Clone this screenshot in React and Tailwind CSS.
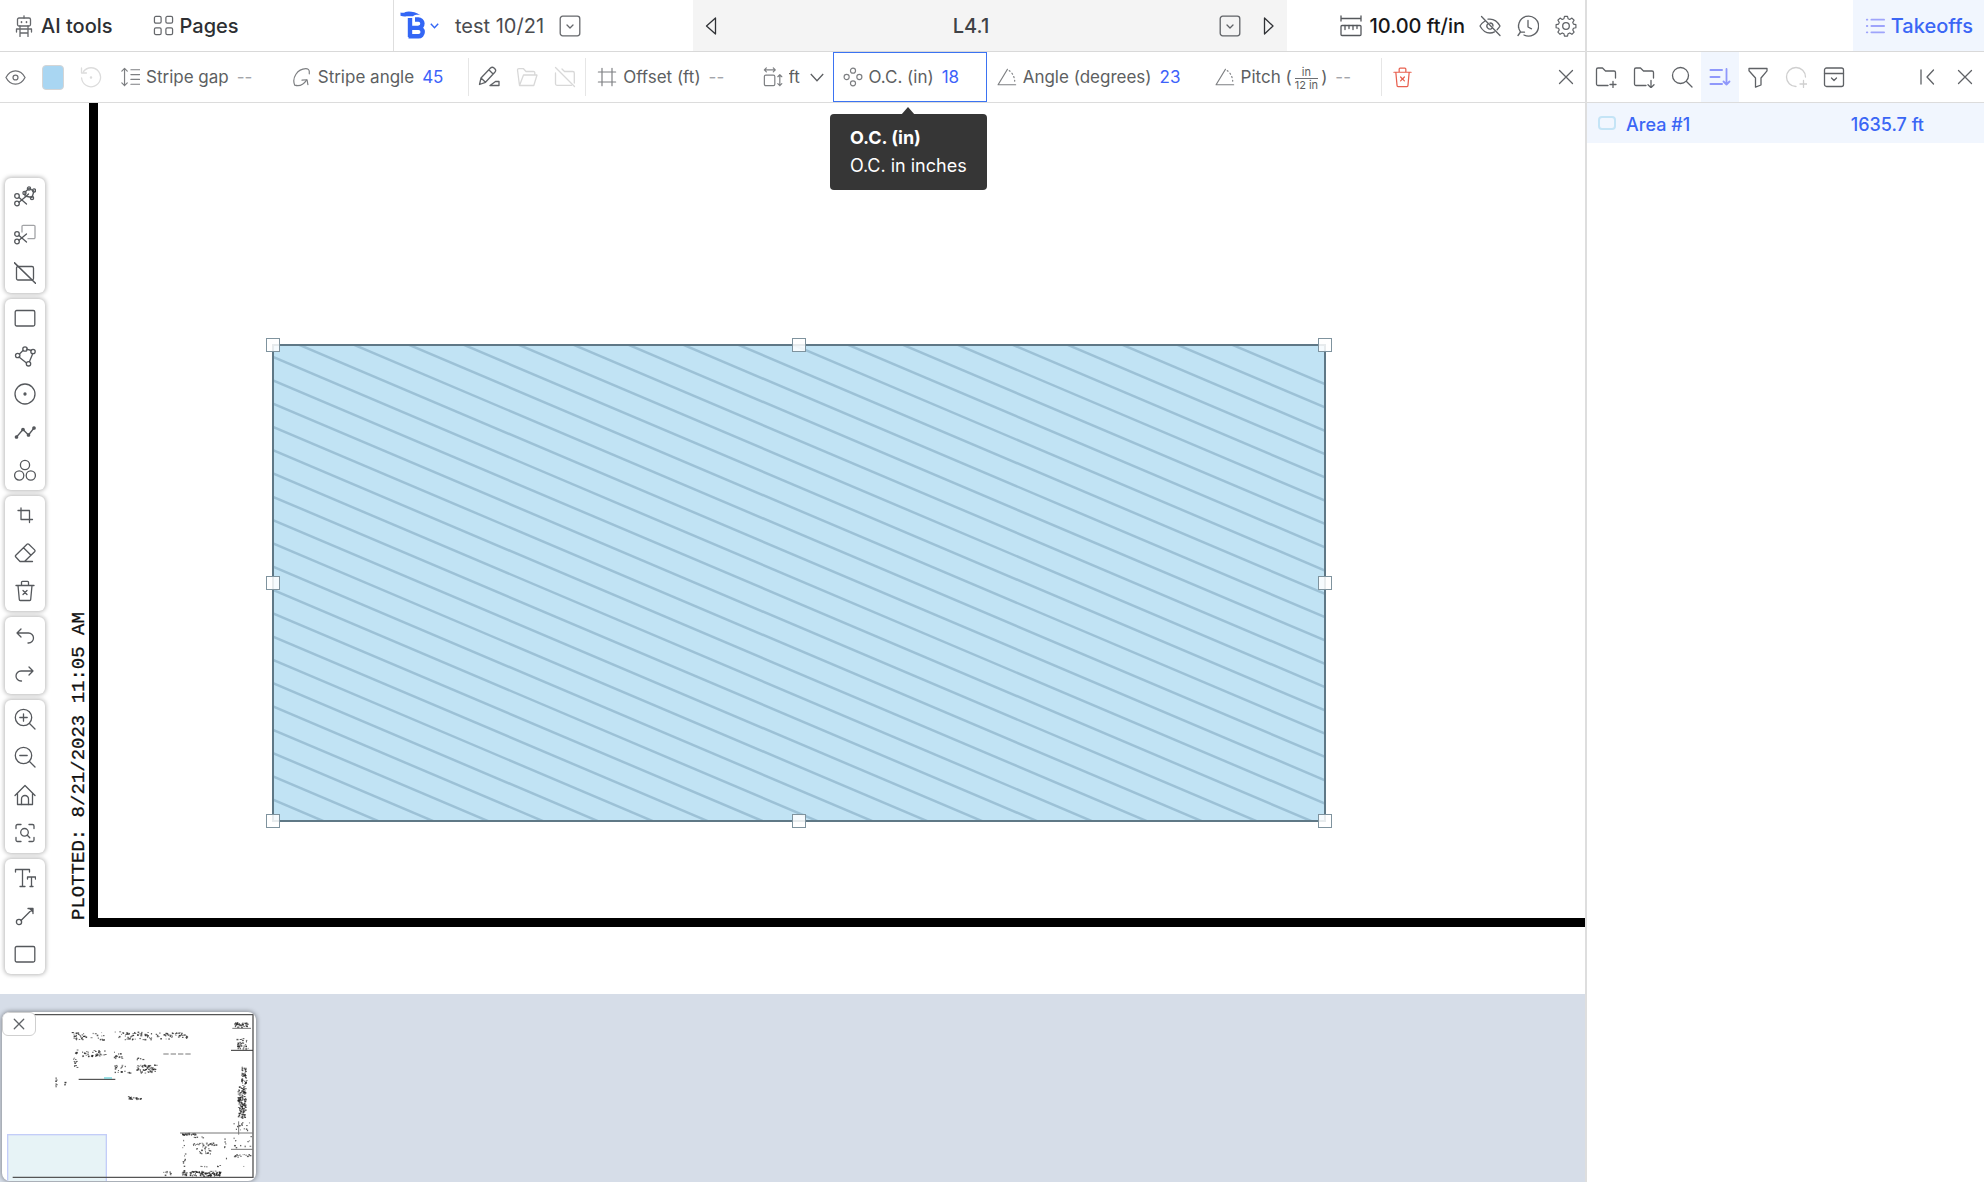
import React, { useState } from 'react';

function Icon({ children, size = 22, className = '', sw = 1.3 }) {
  return (
    <svg
      width={size}
      height={size}
      viewBox="0 0 22 22"
      fill="none"
      stroke="currentColor"
      strokeWidth={sw}
      strokeLinecap="round"
      strokeLinejoin="round"
      aria-hidden="true"
      className={`shrink-0 ${className}`}
    >
      {children}
    </svg>
  );
}

const trashShape = (
  <>
    <path d="M2 5.5h18M4 5.5l1.300 14a1 1 0 0 0 1 1h9.400a1 1 0 0 0 1-1l1.300-14M7.500 5.500V2.300a1 1 0 0 1 1-1h5a1 1 0 0 1 1 1v3.200" />
    <path d="M9 10.500l4 4M13 10.500l-4 4" />
  </>
);

const scissorShape = (
  <>
    <circle cx="3" cy="10" r="2.300" />
    <circle cx="3" cy="17.500" r="2.300" />
    <path d="M5 11.500l7.500 6.500M5 16.300l7.500-6.300" />
  </>
);

const angleShape = (
  <>
    <path d="M20.500 19.500H1.200L11.500 2.500" />
    <path d="M13.500 4c3 2 5.500 6 6 11.500" strokeDasharray="1.200 3" />
  </>
);

const icons = {
  robot: (
    <>
      <path d="M11 3V.8" />
      <rect x="4.500" y="3" width="13" height="8" rx="1.500" />
      <path d="M8.500 6.800v.6M13.500 6.800v.6" strokeWidth="1.600" />
      <path d="M3.500 17v-3h15v3M7 11v10.500M15 11v10.500M7 18h8" />
    </>
  ),
  pages: (
    <>
      <rect x="1.500" y="1.500" width="7" height="7" rx="1.500" />
      <rect x="13.500" y="1.500" width="7" height="7" rx="1.500" />
      <rect x="1.500" y="13.500" width="7" height="7" rx="1.500" />
      <rect x="13.500" y="13.500" width="7" height="7" rx="1.500" />
    </>
  ),
  boxDown: (
    <>
      <rect x="1.200" y="1.200" width="19.600" height="19.600" rx="2.500" />
      <path d="M8 10l3 3 3-3" />
    </>
  ),
  prev: <path d="M14.500 3v16L5.500 11z" />,
  next: <path d="M7.500 3v16l8.500-8z" />,
  scale: (
    <>
      <path d="M1 3.500h20M1 1v5M21 1v5" />
      <rect x="1" y="10.500" width="20" height="10" rx="1" />
      <path d="M5 10.500v4M9 10.500v3M13 10.500v4M17 10.500v3" />
    </>
  ),
  eye: (
    <>
      <path d="M1 11c2.500-4.700 6-7 10-7s7.500 2.300 10 7c-2.500 4.700-6 7-10 7s-7.500-2.300-10-7z" />
      <circle cx="11" cy="11" r="2.600" />
    </>
  ),
  eyeOff: (
    <>
      <path d="M6 6C4 7.200 2.300 8.900 1 11c2.500 4.700 6 7 10 7 1.600 0 3.100-.4 4.500-1.100M9 4.200c5-.8 9.300 1.800 12 6.800-.8 1.500-1.800 2.700-2.900 3.700" />
      <path d="M8.500 9.200a3 3 0 0 0 4.200 4.200M11 8a3 3 0 0 1 3 3M2.500 1.500l18.500 19" />
    </>
  ),
  history: (
    <>
      <path d="M3.500 17A10 10 0 1 1 7 20M1.500 12.500V10M1 20.500L3.500 17l4 .2" />
      <path d="M11 5.500V12l3.500 1.800" />
    </>
  ),
  gear: (
    <>
      <circle cx="11" cy="11" r="3.300" />
      <path d="M9.300 1h3.400l.6 2.700 1.900.8 2.400-1.500 2.400 2.400-1.500 2.400.8 1.900 2.700.6v3.400l-2.700.6-.8 1.900 1.500 2.400-2.400 2.400-2.400-1.500-1.900.8-.6 2.700H9.300l-.6-2.700-1.900-.8L4.400 21 2 18.600l1.500-2.400-.8-1.900L0 13.700v-3.400l2.700-.6.8-1.900L2 5.400 4.400 3l2.400 1.500 1.900-.8z" transform="translate(1.100 .4) scale(.9)" />
    </>
  ),
  rotate: (
    <>
      <path d="M3.500 5.500A9.500 9.500 0 1 1 1.600 12M1.500 2v5h5" />
      <circle cx="11" cy="11.500" r=".6" fill="currentColor" />
    </>
  ),
  stripeGap: (
    <>
      <path d="M5 1.500v19M2 4.500l3-3 3 3M2 17.500l3 3 3-3" />
      <path d="M12 3h9.500M12 8.300h9.500M12 13.700h9.500M12 19h9.500" />
    </>
  ),
  stripeAngle: (
    <>
      <path d="M19 7.500V5c0-2-1.500-3.200-3.800-3.200C6 2-.5 12 3 20c5 1.500 10-1 13-5.500" />
      <path d="M11 14.500l5.500-.5 1 5.500" />
    </>
  ),
  pen: (
    <>
      <path d="M1.500 18.500L3 12 12.500 2c1-1 2.500-1 3.500 0l.8.8c1 1 1 2.500 0 3.500L7.500 16.300zM10.800 3.700l4.300 4.300M3 12l4.500 4.300" />
      <path d="M12 19.500h9v-4h-3.500z" />
    </>
  ),
  folderOpen: (
    <path d="M3.500 19.500L1.500 4a1.300 1.300 0 0 1 1.300-1.300h4.700L10 5.500h7.500A1.300 1.300 0 0 1 18.800 7v2M3.500 19.500h14.300L21 9H7.500z" />
  ),
  folderOff: (
    <path d="M1.500 7v10.800c0 .9.600 1.500 1.500 1.500h14.500M8 3l2.500 2.500h8.300A1.500 1.500 0 0 1 20.300 7v10M1.500 1.500l19 19" />
  ),
  hash: <path d="M5.500 1.500v19M16.500 1.500v19M1.500 5.500h19M1.500 16.500h19" />,
  size: (
    <>
      <rect x="1.500" y="9" width="11.500" height="11.500" rx="1.500" />
      <path d="M1.500 3.200h12M3.700 1L1.500 3.200l2.200 2.200M11.300 1l2.200 2.200-2.200 2.200M18.500 8.500v12M16.300 10.700l2.200-2.200 2.200 2.200M16.300 18.300l2.200 2.200 2.200-2.200" />
    </>
  ),
  spacing: (
    <>
      <circle cx="11" cy="4" r="2.800" />
      <circle cx="11" cy="18" r="2.800" />
      <circle cx="4" cy="11" r="2.800" />
      <circle cx="18" cy="11" r="2.800" />
    </>
  ),
  angle: angleShape,
  trash: trashShape,
  close: <path d="M4.500 4.500l13 13M17.500 4.500l-13 13" />,
  list: (
    <>
      <path d="M7 4h14M7 11h14M7 18h14" />
      <path d="M2 4h.6M2 11h.6M2 18h.6" />
    </>
  ),
  folderPlus: (
    <path d="M13 19.500H3A1.500 1.500 0 0 1 1.500 18V3.500A1.500 1.500 0 0 1 3 2h4.500L10.500 5H19a1.500 1.500 0 0 1 1.500 1.500V12M18 15.500v6M15 18.500h6" />
  ),
  folderDown: (
    <path d="M13 19.500H3A1.500 1.500 0 0 1 1.500 18V3.500A1.500 1.500 0 0 1 3 2h4.500L10.500 5H19a1.500 1.500 0 0 1 1.500 1.500V12M18 14.500v7M15 18.700l3 3 3-3" />
  ),
  search: (
    <>
      <circle cx="9.500" cy="9.500" r="8" />
      <path d="M15.500 15.500l5.500 5.500" />
    </>
  ),
  sort: (
    <>
      <path d="M1.500 4h11.500M1.500 11h9M1.500 18h11.500" strokeWidth="2" />
      <path d="M17.500 3v15.500M14.500 15.500l3 3 3-3" strokeWidth="1.800" />
    </>
  ),
  filter: <path d="M2 2.500h18v2.300L14 12v7l-5.500 2.200V12L2 4.800z" />,
  addCircle: <path d="M11 20.500A9.500 9.500 0 1 1 20.500 11M18.500 14.500v7M15 18h7" />,
  archive: (
    <>
      <rect x="1.500" y="2" width="19" height="18.500" rx="2" />
      <path d="M1.500 7.500h19M8.500 12l2.500 2.500 2.500-2.500" />
    </>
  ),
  collapse: <path d="M5 4v14M17.500 4L11 11l6.500 7" />,
  cutPoly: (
    <>
      {scissorShape}
      <path d="M12.500 10l2-2M11 6l4-3.500 5 2.500-2 6.500-7-1.500z" />
      <circle cx="15" cy="2.500" r="1.600" />
      <circle cx="20" cy="4.500" r="1.600" />
      <circle cx="18" cy="12" r="1.600" />
      <circle cx="10.500" cy="7" r="1.600" />
    </>
  ),
  cutRect: (
    <>
      {scissorShape}
      <path d="M8 8V2.500a1.200 1.200 0 0 1 1.200-1.200h10.600A1.200 1.200 0 0 1 21 2.500v11a1.200 1.200 0 0 1-1.200 1.200H14" strokeOpacity=".55" />
    </>
  ),
  rectOff: (
    <>
      <rect x="2.500" y="4.500" width="17" height="13.500" rx="1.500" />
      <path d="M.5.800l21 20.500" strokeWidth="1.600" />
    </>
  ),
  rect: <rect x="1.200" y="3.500" width="19.600" height="15.500" rx="1.500" />,
  polygon: (
    <>
      <path d="M5.500 9L9 5.500M12.500 4.200l5 1.300M18.800 8.500L15.500 16.500M5 12l7.500 6" />
      <circle cx="3.700" cy="10.500" r="2.200" />
      <circle cx="11" cy="4" r="2.200" />
      <circle cx="19" cy="6.500" r="2.200" />
      <circle cx="14.500" cy="18.800" r="2.200" />
    </>
  ),
  circle: (
    <>
      <circle cx="11" cy="11" r="10" />
      <circle cx="11" cy="11" r="1" fill="currentColor" />
    </>
  ),
  polyline: (
    <>
      <path d="M2.500 16L9 8.500l5.500 5.500L20 7" />
      <circle cx="2.500" cy="16" r="1.200" fill="currentColor" />
      <circle cx="9" cy="8.500" r="1.200" fill="currentColor" />
      <circle cx="14.500" cy="14" r="1.200" fill="currentColor" />
      <circle cx="20" cy="7" r="1.200" fill="currentColor" />
    </>
  ),
  count: (
    <>
      <circle cx="11" cy="6" r="4.600" />
      <circle cx="5.200" cy="16.500" r="4.600" />
      <circle cx="16.800" cy="16.500" r="4.600" />
    </>
  ),
  crop: <path d="M7 4v11.500h11.500M4 6.500h11.500V18.500" />,
  eraser: (
    <path d="M6 19.500L1.800 15a1.300 1.300 0 0 1 0-1.800L13 2.300a1.300 1.300 0 0 1 1.800 0l5.800 5.600a1.300 1.300 0 0 1 0 1.800L10.500 19.500zM9.500 5.800l7.500 7.500M6 19.500h12.500" />
  ),
  undo: <path d="M7 4L3 8l4 4M3 8h11.500a5 5 0 0 1 0 10H14" />,
  redo: <path d="M15 4l4 4-4 4M19 8H7a5 5 0 0 0 0 10h.5" />,
  zoomIn: (
    <>
      <circle cx="9.500" cy="9.500" r="8.200" />
      <path d="M15.500 15.500l5.500 5.500M5.800 9.500h7.400M9.500 5.800v7.400" />
    </>
  ),
  zoomOut: (
    <>
      <circle cx="9.500" cy="9.500" r="8.200" />
      <path d="M15.500 15.500l5.500 5.500M5.800 9.500h7.400" />
    </>
  ),
  home: (
    <>
      <path d="M1 11.500L11 1.500l10 10M3.500 9.500V20.500h15V9.500" />
      <path d="M7.500 20.500V15a3.500 3.500 0 0 1 7 0v5.500" />
    </>
  ),
  zoomFit: (
    <>
      <path d="M2 6.500V4a1.500 1.500 0 0 1 1.500-1.500H7M15 2.500h3.500A1.500 1.500 0 0 1 20 4v2.500M20 15.500V18a1.500 1.500 0 0 1-1.500 1.500H15M7 19.500H3.500A1.500 1.500 0 0 1 2 18v-2.500" />
      <circle cx="10.500" cy="10.300" r="3.800" />
      <path d="M13.300 13.200l2.500 2.500" />
    </>
  ),
  text: (
    <path d="M1.500 5V2.500h14V5M8.500 2.500v17M6 19.500h5M13.500 12v-2h8v2M17.500 10v9.500M16 19.500h3" />
  ),
  arrow: (
    <>
      <path d="M7 15.500L19 3.500M14 3.500h5v5M15.500 3.500L19 7" />
      <circle cx="5" cy="17" r="2.600" />
    </>
  ),
};

const toolGroups = [
  [['cutPoly', 'Cut polygon'], ['cutRect', 'Cut rectangle'], ['rectOff', 'Remove cutout']],
  [['rect', 'Rectangle'], ['polygon', 'Polygon'], ['circle', 'Circle'], ['polyline', 'Polyline'], ['count', 'Count']],
  [['crop', 'Crop'], ['eraser', 'Eraser'], ['trash', 'Delete']],
  [['undo', 'Undo'], ['redo', 'Redo']],
  [['zoomIn', 'Zoom in'], ['zoomOut', 'Zoom out'], ['home', 'Home'], ['zoomFit', 'Zoom to area']],
  [['text', 'Text'], ['arrow', 'Arrow'], ['rect', 'Box']],
];

function IconButton({ icon, label, className = 'text-[#5f6266]', size }) {
  return (
    <button
      type="button"
      aria-label={label}
      className={`flex h-full w-[38px] shrink-0 items-center justify-center ${className}`}
    >
      <Icon size={size}>{icons[icon]}</Icon>
    </button>
  );
}

function Field({ id, icon, label, value = '', active, children }) {
  const [text, setText] = useState(value);
  return (
    <div
      className={`relative flex h-full shrink-0 items-center px-[9px] ${
        active ? 'border border-[#3b73f2]' : 'border border-transparent'
      }`}
    >
      <Icon size={20} className="mr-[6px] text-[#7d7f82]">
        {icons[icon]}
      </Icon>
      <label htmlFor={id} className="mr-2 flex items-center pt-0.5 whitespace-nowrap text-[#5d5f62]">
        {label}
      </label>
      <input
        id={id}
        value={text}
        onChange={(e) => setText(e.target.value)}
        placeholder="--"
        className="w-[35px] bg-transparent pt-0.5 text-[#3d62fa] outline-none placeholder:text-[#a3a5aa]"
      />
      {children}
    </div>
  );
}

function Divider() {
  return <div className="mx-px h-[38px] w-px shrink-0 bg-[#e6e6e6]" />;
}

function TopBar() {
  return (
    <header className="flex h-[52px] shrink-0 items-center border-b border-[#d9d9d9] text-[20px] text-[#2d2f33]">
      <div className="flex h-full w-[394px] shrink-0 items-center gap-10 border-r border-[#dedede] pl-[13px]">
        <button type="button" className="flex items-center gap-1.5 font-medium">
          <Icon className="text-[#66686c]">{icons.robot}</Icon>
          AI tools
        </button>
        <button type="button" className="flex items-center gap-1.5 font-medium">
          <Icon size={21} className="text-[#66686c]">{icons.pages}</Icon>
          Pages
        </button>
      </div>
      <div className="flex h-full w-[299px] shrink-0 items-center pl-1.5">
        <button type="button" aria-label="Home menu" className="mr-4 flex items-center gap-1 text-[#3366f5]">
          <svg width="26" height="30" viewBox="0 0 26 30" fill="none" stroke="currentColor" aria-hidden="true">
            <path d="M.5 1.500c2 .6 3.500.4 5-.5C8 0 15 .3 20.500 4.200c-3-.7-5.500-.5-7.500 1H6.500C5 5.800 2.500 5.500.5 4.800z" fill="currentColor" stroke="none" />
            <path d="M10 7v19M8.500 25.300h10a4.200 4.200 0 0 0 0-8.400H10M15 8.500h3.200a3.800 3.800 0 0 1 .3 8.200" strokeWidth="4.400" />
          </svg>
          <svg width="9" height="6" viewBox="0 0 9 6" fill="none" stroke="currentColor" strokeWidth="1.400" aria-hidden="true">
            <path d="M.8.8l3.700 4L8.200.8" />
          </svg>
        </button>
        <span className="mr-[15px] text-[#4a4c50]">test 10/21</span>
        <button type="button" aria-label="Project menu" className="text-[#66686c]">
          <Icon>{icons.boxDown}</Icon>
        </button>
      </div>
      <div className="flex h-full min-w-0 grow items-center bg-[#f4f4f4] text-[#3f4246]">
        <IconButton icon="prev" label="Previous page" className="text-[#2f3135]" />
        <span className="grow text-center font-medium">L4.1</span>
        <IconButton icon="boxDown" label="Choose page" />
        <IconButton icon="next" label="Next page" className="text-[#2f3135]" />
      </div>
      <div className="flex h-full w-[298px] shrink-0 items-center justify-end">
        <button type="button" className="mr-1.5 flex items-center gap-2 font-medium text-[#17181a]">
          <Icon className="text-[#55585c]">{icons.scale}</Icon>
          10.00 ft/in
        </button>
        <IconButton icon="eyeOff" label="Hide markups" />
        <IconButton icon="history" label="History" />
        <IconButton icon="gear" label="Settings" />
      </div>
    </header>
  );
}

function PropertyBar() {
  return (
    <div className="relative z-10 flex h-[51px] shrink-0 items-center border-b border-[#dcdcdc] text-[17px]">
      <button type="button" aria-label="Toggle visibility" className="flex h-full w-[34px] shrink-0 items-center justify-center pr-1 text-[#6d6f73]">
        <Icon size={21}>{icons.eye}</Icon>
      </button>
      <button type="button" aria-label="Fill colour" className="flex h-full w-[38px] shrink-0 items-center justify-center">
        <span className="h-[25px] w-[22px] rounded border border-[#d5d5d5] bg-[#a9d6f2]" />
      </button>
      <IconButton icon="rotate" label="Reset colour" className="text-[#dcdcdc]" />
      <Field id="stripe-gap" icon="stripeGap" label="Stripe gap" />
      <Field id="stripe-angle" icon="stripeAngle" label="Stripe angle" value="45" />
      <Divider />
      <IconButton icon="pen" label="Edit style" />
      <IconButton icon="folderOpen" label="Move to folder" className="text-[#d8d8d8]" />
      <IconButton icon="folderOff" label="Remove from folder" className="text-[#d8d8d8]" />
      <Divider />
      <Field id="offset" icon="hash" label="Offset (ft)" />
      <label className="flex h-full shrink-0 items-center px-[9px] text-[#5d5f62]">
        <Icon size={20} className="mr-[6px] text-[#7d7f82]">
          {icons.size}
        </Icon>
        <span className="relative block w-[35px]">
          <select aria-label="Unit" defaultValue="ft" className="block w-full appearance-none bg-transparent pt-0.5 outline-none">
            <option>ft</option>
            <option>in</option>
          </select>
          <svg width="14" height="9" viewBox="0 0 14 9" fill="none" stroke="currentColor" strokeWidth="1.300" aria-hidden="true" className="pointer-events-none absolute top-2.5 right-0">
            <path d="M.8 1L7 7.800 13.200 1" />
          </svg>
        </span>
      </label>
      <Field id="on-center" icon="spacing" label="O.C. (in)" value="18" active>
        <div role="tooltip" className="absolute top-[61px] -right-px rounded bg-[#363636] px-5 py-[10px] text-[18px] leading-7 whitespace-nowrap text-white">
          <svg width="14" height="8" viewBox="0 0 14 8" aria-hidden="true" className="absolute -top-[7px] left-1/2 -translate-x-1/2 text-[#363636]">
            <path d="M0 8L7 0l7 8z" fill="currentColor" />
          </svg>
          <p className="font-bold">O.C. (in)</p>
          <p>O.C. in inches</p>
        </div>
      </Field>
      <Field id="angle" icon="angle" label="Angle (degrees)" value="23" />
      <Field
        id="pitch"
        icon="angle"
        label={
          <>
            Pitch (
            <span className="mx-[3px] flex flex-col items-center text-[11px] leading-3">
              <span>in</span>
              <span className="border-t border-[#6d6f73]">12 in</span>
            </span>
            )
          </>
        }
      />
      <Divider />
      <IconButton icon="trash" label="Delete takeoff" className="text-[#e8604f]" size={21} />
      <div className="ml-auto h-full">
        <IconButton icon="close" label="Close properties" />
      </div>
    </div>
  );
}

// stripes run at 23 degrees, offset by `step` down the left edge
const area = { x: 273, y: 345, w: 1052, h: 476 };
const slope = 0.4245;
const step = 23.3;
const stripes = Array.from({ length: 39 }, (_, i) => 357 + (i - 18) * step);

function Drawing() {
  const { x, y, w, h } = area;
  const handles = [
    [x, y], [x + w / 2, y], [x + w, y],
    [x, y + h / 2], [x + w, y + h / 2],
    [x, y + h], [x + w / 2, y + h], [x + w, y + h],
  ];
  return (
    <svg className="absolute inset-0 h-full w-full" aria-label="Plan sheet L4.1">
      <g transform="translate(0 -103)">
        <rect x="0" y="0" width="100%" height="994" fill="#fff" />
        <rect x="89" y="0" width="9" height="927" fill="#000" />
        <rect x="89" y="918" width="100%" height="9" fill="#000" />
        <text
          transform="translate(84 920) rotate(-90)"
          fontSize="19"
          fill="#111"
          stroke="#111"
          strokeWidth=".3"
          fontFamily="'Liberation Mono', monospace"
        >
          PLOTTED: 8/21/2023 11:05 AM
        </text>
        <clipPath id="area-clip">
          <rect x={x} y={y} width={w} height={h} />
        </clipPath>
        <rect x={x} y={y} width={w} height={h} fill="#c1e3f4" />
        <g clipPath="url(#area-clip)" stroke="#9cc1d6" strokeWidth="2.500">
          {stripes.map((sy) => (
            <line key={sy} x1={x} y1={sy} x2={x + w} y2={sy + w * slope} />
          ))}
        </g>
        <rect x={x} y={y} width={w} height={h} fill="none" stroke="#5f7886" strokeWidth="2" />
        {handles.map(([hx, hy]) => (
          <rect
            key={`${hx}-${hy}`}
            x={hx - 6.5}
            y={hy - 6.5}
            width="13"
            height="13"
            fill="#fff"
            fillOpacity=".85"
            stroke="#7f939e"
          />
        ))}
      </g>
    </svg>
  );
}

// [x, y, width, height, marks]
const inkSpots = [
  [212, 156, 100, 22, 40], [342, 154, 112, 24, 60], [467, 156, 100, 20, 45],
  [218, 208, 14, 56, 18], [246, 210, 68, 18, 42], [338, 214, 28, 20, 12],
  [388, 232, 48, 6, 5], [342, 254, 34, 24, 18], [380, 272, 14, 6, 3],
  [408, 252, 62, 26, 65], [382, 348, 40, 10, 20], [702, 126, 44, 16, 35],
  [708, 174, 36, 32, 36], [722, 258, 16, 60, 45], [712, 318, 24, 96, 150],
  [698, 424, 50, 26, 14], [544, 458, 40, 6, 24], [546, 468, 10, 90, 10],
  [578, 468, 30, 4, 5], [578, 488, 70, 6, 26], [582, 498, 48, 22, 18],
  [672, 466, 6, 90, 6], [698, 466, 54, 36, 12], [698, 522, 52, 8, 18],
  [590, 555, 150, 4, 8], [488, 570, 26, 14, 9], [545, 570, 14, 16, 16],
  [568, 572, 92, 16, 110], [166, 290, 1, 32, 9], [193, 265, 1, 100, 4],
];

function spread(n) {
  const v = Math.sin(n * 12.9898) * 43758.5453;
  return v - Math.floor(v);
}

function MiniMap() {
  return (
    <div className="absolute bottom-px left-0.5 h-[169px] w-[254px] overflow-hidden rounded-lg bg-white shadow-[0_0_4px_1px_rgba(0,0,0,0.35)]">
      <svg viewBox="6 96 762 507" className="block h-full w-full" aria-label="Sheet overview">
        <rect x="23" y="464" width="296" height="150" fill="#e7f3f6" stroke="#c3cdf8" strokeWidth="4" />
        {inkSpots.map(([sx, sy, sw, sh, n], k) =>
          Array.from({ length: n }, (_, i) => (
            <rect
              key={`${k}-${i}`}
              x={sx + spread(k * 211 + i * 3 + 1) * sw}
              y={sy + spread(k * 307 + i * 7 + 2) * sh}
              width={2 + spread(i + k) * 4}
              height={2 + spread(i * 5 + k) * 3}
              fill="#222"
              fillOpacity=".75"
            />
          ))
        )}
        <g stroke="#333" strokeWidth="3" fill="none">
          <path d="M100 104h659v488H38" stroke="#555" strokeWidth="4" />
          <path d="M236 298h110M693 211h66" />
          <path d="M540 459h219M693 508h66M697 145h56M716 424v40" stroke="#777" />
          <path d="M490 222h85" strokeWidth="2" strokeDasharray="16 6" />
          <path d="M312 294h24" stroke="#3fc4cf" />
        </g>
      </svg>
      <button
        type="button"
        aria-label="Close overview"
        className="absolute top-0 left-0 flex h-6 w-[34px] items-center justify-center rounded-md border border-[#cfcfcf] bg-white text-[#5f6266]"
      >
        <Icon size={16} sw={1.8}>{icons.close}</Icon>
      </button>
    </div>
  );
}

function ToolPalette() {
  return (
    <nav aria-label="Drawing tools" className="absolute top-[75px] left-[5px] flex flex-col gap-1.5">
      {toolGroups.map((group, i) => (
        <div key={i} className="flex w-10 flex-col items-center rounded-md bg-white pb-px shadow-[0_0_4px_1px_rgba(0,0,0,0.28)]">
          {group.map(([icon, label]) => (
            <button key={label} type="button" aria-label={label} className="flex h-[38px] w-full items-center justify-center text-[#55585c]">
              <Icon>{icons[icon]}</Icon>
            </button>
          ))}
        </div>
      ))}
    </nav>
  );
}

function TakeoffsPanel() {
  return (
    <aside className="flex w-[399px] shrink-0 flex-col border-l-2 border-[#dedede] bg-white">
      <div className="flex h-[52px] shrink-0 justify-end border-b border-[#d9d9d9]">
        <button type="button" className="flex items-center gap-1.5 bg-[#f1f6fe] pr-[11px] pl-3 text-[20px] font-medium text-[#3b66f5]">
          <Icon className="text-[#9ea4fb]" size={20} sw={2}>{icons.list}</Icon>
          Takeoffs
        </button>
      </div>
      <div className="flex h-[51px] shrink-0 items-center border-b border-[#dcdcdc]">
        <IconButton icon="folderPlus" label="New folder" />
        <IconButton icon="folderDown" label="Import folder" />
        <IconButton icon="search" label="Search" />
        <IconButton icon="sort" label="Sort" className="bg-[#f1f6fe] text-[#8f98fb]" />
        <IconButton icon="filter" label="Filter" />
        <IconButton icon="addCircle" label="Add" className="text-[#cfcfcf]" />
        <IconButton icon="archive" label="Archive" />
        <div className="ml-auto flex h-full">
          <IconButton icon="collapse" label="Collapse" />
          <IconButton icon="close" label="Close panel" />
        </div>
      </div>
      <a href="#area-1" className="flex h-10 items-center bg-[#f1f6fe] pr-[60px] pl-[11px] text-[18px] font-medium text-[#3b66f5]">
        <span className="mr-2.5 h-3.5 w-[18px] rounded-sm border-2 border-[#c4e4f6]" />
        <span className="grow pt-0.5">Area #1</span>
        <span className="pt-0.5">1635.7 ft</span>
      </a>
    </aside>
  );
}

export default function App() {
  return (
    <div className="flex h-screen bg-white font-[Inter,sans-serif]">
      <main className="flex min-w-0 grow flex-col">
        <TopBar />
        <PropertyBar />
        <section className="relative grow overflow-hidden bg-[#d6dde8]">
          <Drawing />
          <ToolPalette />
          <MiniMap />
        </section>
      </main>
      <TakeoffsPanel />
    </div>
  );
}
